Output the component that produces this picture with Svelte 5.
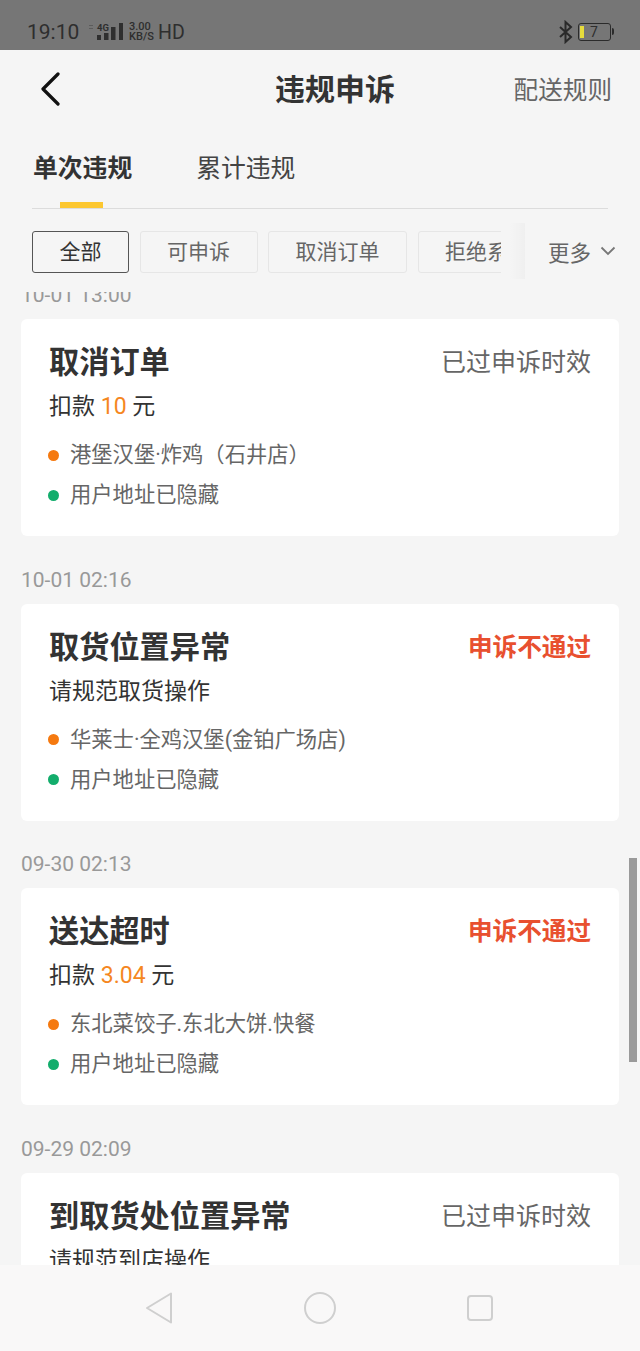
<script>
  const filters = [
    { label: '全部', active: true },
    { label: '可申诉' },
    { label: '取消订单' },
    { label: '拒绝系统派单' }
  ];

  const records = [
    {
      time: '10-01 13:00',
      title: '取消订单',
      status: '已过申诉时效',
      deduct: '10',
      shop: '港堡汉堡·炸鸡（石井店）'
    },
    {
      time: '10-01 02:16',
      title: '取货位置异常',
      status: '申诉不通过',
      rejected: true,
      note: '请规范取货操作',
      shop: '华莱士·全鸡汉堡(金铂广场店)'
    },
    {
      time: '09-30 02:13',
      title: '送达超时',
      status: '申诉不通过',
      rejected: true,
      deduct: '3.04',
      shop: '东北菜饺子.东北大饼.快餐'
    },
    {
      time: '09-29 02:09',
      title: '到取货处位置异常',
      status: '已过申诉时效',
      note: '请规范到店操作',
      shop: ''
    }
  ];
</script>

<div class="screen">
  <div class="statusbar">
    <div class="status-left">
      <span class="clock">19:10</span>
      <svg class="signal" width="36" height="20" viewBox="0 0 36 20">
        <text x="9" y="9" class="net">4G</text>
        <rect x="1" y="3" width="4" height="1" fill="#5c5c5c" />
        <rect x="1" y="6" width="4" height="1" fill="#5c5c5c" />
        <rect x="9" y="13" width="4" height="5" fill="#2f2f2f" />
        <rect x="16" y="11" width="4.500" height="7" fill="#2f2f2f" />
        <rect x="23" y="5" width="4.500" height="13" fill="#2f2f2f" />
        <rect x="31" y="1" width="4" height="17" fill="#2f2f2f" />
      </svg>
      <span class="speed"><b>3.00</b><b>KB/S</b></span>
      <span class="hd">HD</span>
    </div>
    <div class="status-right">
      <svg width="16" height="24" viewBox="0 0 16 24" fill="none" stroke="#2a2a2a" stroke-width="2">
        <path d="M2 7l11 10-5.500 5V2l5.500 5L2 17" />
      </svg>
      <div class="battery"><i></i><span>7</span></div>
    </div>
  </div>

  <header class="navbar">
    <svg class="back" width="22" height="34" viewBox="0 0 22 34" fill="none" stroke="#111" stroke-width="3.200" stroke-linecap="round" stroke-linejoin="round">
      <path d="M18 2L3 17l15 15" />
    </svg>
    <h1>违规申诉</h1>
    <span class="rules">配送规则</span>
  </header>

  <nav class="tabs">
    <span class="tab current">单次违规</span>
    <span class="tab">累计违规</span>
  </nav>

  <div class="filterbar">
    <div class="chips">
      {#each filters as f}
        <span class="chip" class:active={f.active}>{f.label}</span>
      {/each}
    </div>
    <div class="more">
      更多
      <svg width="16" height="10" viewBox="0 0 16 10" fill="none" stroke="#777" stroke-width="1.800">
        <path d="M1.500 1.500L8 8l6.500-6.500" />
      </svg>
    </div>
  </div>

  <div class="list">
    <div class="scroller">
      {#each records as r}
        <div class="time">{r.time}</div>
        <section class="card">
          <div class="card-head">
            <h2>{r.title}</h2>
            <span class="status" class:rejected={r.rejected}>{r.status}</span>
          </div>
          {#if r.deduct}
            <p class="detail">扣款 <em>{r.deduct}</em> 元</p>
          {:else}
            <p class="detail">{r.note}</p>
          {/if}
          <p class="place"><i class="dot orange"></i>{r.shop}</p>
          <p class="place"><i class="dot green"></i>用户地址已隐藏</p>
        </section>
      {/each}
    </div>
    <div class="scrollbar"></div>
  </div>

  <footer class="softkeys">
    <svg width="30" height="34" viewBox="0 0 30 34" fill="none" stroke="#cfcfcf" stroke-width="2" stroke-linejoin="round">
      <path d="M26 2.500v29L2 17z" />
    </svg>
    <svg width="34" height="34" viewBox="0 0 34 34" fill="none" stroke="#cfcfcf" stroke-width="2">
      <circle cx="17" cy="17" r="15" />
    </svg>
    <svg width="28" height="28" viewBox="0 0 28 28" fill="none" stroke="#cfcfcf" stroke-width="2">
      <rect x="2" y="2" width="24" height="24" rx="3" />
    </svg>
  </footer>
</div>

<style>
  :global(body) {
    margin: 0;
    background: #f5f5f5;
  }
  .screen {
    width: 640px;
    height: 1351px;
    display: flex;
    flex-direction: column;
    position: relative;
    overflow: hidden;
    background: #f5f5f5;
    font-family: Roboto, "Noto Sans CJK SC", sans-serif;
    color: #333;
  }
  .statusbar {
    height: 50px;
    flex: none;
    background: #767676;
    display: flex;
    justify-content: space-between;
    align-items: flex-end;
    padding: 0 27px 6px;
    box-sizing: border-box;
    color: #2e2e2e;
  }
  .status-left {
    display: flex;
    align-items: center;
    height: 24px;
  }
  .clock {
    font-size: 21px;
    width: 61px;
  }
  .signal {
    margin-right: 5px;
  }
  .net {
    font: bold 9.500px Roboto, sans-serif;
    fill: #2f2f2f;
  }
  .speed {
    display: flex;
    flex-direction: column;
    font-size: 11px;
    line-height: 10.500px;
    width: 29px;
  }
  .speed b {
    font-weight: 500;
  }
  .hd {
    font-size: 19.500px;
  }
  .status-right {
    display: flex;
    align-items: center;
    gap: 4px;
    margin-right: 2px;
  }
  .battery {
    width: 33px;
    height: 18px;
    box-sizing: border-box;
    border: 1.500px solid #2b2b2b;
    border-radius: 3px;
    position: relative;
    display: flex;
    align-items: center;
    font-size: 14px;
    line-height: 1;
  }
  .battery::after {
    content: "";
    position: absolute;
    right: -3.500px;
    top: 4px;
    width: 2px;
    height: 7px;
    background: #2b2b2b;
    border-radius: 0 2px 2px 0;
  }
  .battery i {
    width: 4px;
    height: 12px;
    margin-left: 1px;
    background: #e7dc3c;
  }
  .battery span {
    margin-left: 6px;
  }
  .navbar {
    height: 79px;
    flex: none;
    display: flex;
    align-items: center;
    padding: 0 28px 0 40px;
  }
  .back {
    margin-top: -2px;
  }
  h1 {
    margin: -6px auto 0 213px;
    font-size: 30px;
    font-weight: 700;
    color: #333;
  }
  .rules {
    margin-top: -4px;
    font-size: 24.600px;
    color: #666;
  }
  .tabs {
    margin: 0 32px;
    height: 80px;
    flex: none;
    display: flex;
    gap: 64px;
    border-bottom: 1px solid #dcdcdc;
    box-sizing: border-box;
  }
  .tab {
    font-size: 24.800px;
    line-height: 36px;
    padding-top: 22px;
    color: #444;
    position: relative;
  }
  .tab.current {
    font-weight: 700;
    color: #333;
    margin-left: 1px;
  }
  .tab.current::after {
    content: "";
    position: absolute;
    left: 27px;
    width: 43px;
    bottom: 0;
    height: 6px;
    background: #fcc730;
  }
  .filterbar {
    flex: none;
    height: 76px;
    display: flex;
    align-items: flex-start;
    position: relative;
    z-index: 2;
  }
  .chips {
    display: flex;
    gap: 10.500px;
    padding: 22px 0 0 32px;
    width: 501px;
    flex: none;
    box-sizing: border-box;
    overflow: hidden;
  }
  .chip {
    flex: none;
    height: 42px;
    box-sizing: border-box;
    border: 1px solid #e6e6e6;
    border-radius: 3px;
    padding: 0 26.500px;
    white-space: nowrap;
    font-size: 21px;
    line-height: 40px;
    color: #666;
  }
  .chip.active {
    border-color: #555;
    color: #333;
  }
  .more {
    flex: 1;
    height: 68px;
    margin: 8px 0 0 24px;
    background: #f5f5f5;
    display: flex;
    align-items: center;
    gap: 9px;
    padding-left: 23px;
    font-size: 21.500px;
    color: #666;
    position: relative;
  }
  .more::before {
    content: "";
    position: absolute;
    left: -16px;
    top: 6px;
    bottom: 6px;
    width: 16px;
    background: linear-gradient(to right, rgba(0, 0, 0, 0), rgba(0, 0, 0, 0.025));
  }
  .list {
    flex: 1;
    position: relative;
    overflow: hidden;
    margin-top: 7px;
  }
  .scroller {
    margin-top: -40.500px;
  }
  .time {
    height: 67.500px;
    padding: 31.500px 0 0 21px;
    box-sizing: border-box;
    font-size: 21px;
    line-height: 24px;
    color: #999;
  }
  .card {
    margin: 0 21px;
    height: 217px;
    box-sizing: border-box;
    padding: 20px 28px 0;
    background: #fff;
    border-radius: 6px;
  }
  .card-head {
    display: flex;
    justify-content: space-between;
    align-items: center;
    height: 42px;
  }
  h2 {
    margin: 0;
    font-size: 30.200px;
    font-weight: 700;
    color: #333;
  }
  .status {
    font-size: 25px;
    color: #666;
  }
  .status.rejected {
    font-size: 24.600px;
    font-weight: 700;
    color: #e8502f;
  }
  .detail {
    margin: 6px 0 0;
    height: 40px;
    font-size: 23px;
    line-height: 40px;
    color: #333;
  }
  .detail em {
    font-style: normal;
    color: #f5871f;
  }
  .place {
    margin: 12px 0 0;
    height: 32px;
    font-size: 21.300px;
    line-height: 32px;
    color: #666;
    display: flex;
    align-items: center;
    white-space: nowrap;
  }
  .place + .place {
    margin-top: 8px;
  }
  .dot {
    width: 11px;
    height: 11px;
    border-radius: 50%;
    margin: 0 11px 0 -1px;
    flex: none;
  }
  .orange {
    background: #f5790f;
  }
  .green {
    background: #13ad6c;
  }
  .scrollbar {
    position: absolute;
    right: 3px;
    top: 566px;
    width: 8px;
    height: 204px;
    background: #9a9a9a;
  }
  .softkeys {
    position: absolute;
    left: 0;
    right: 0;
    bottom: 0;
    height: 86px;
    box-sizing: border-box;
    padding-right: 2px;
    background: #f9f8f8;
    display: flex;
    align-items: center;
    justify-content: center;
    gap: 128.500px;
    z-index: 3;
  }
</style>
